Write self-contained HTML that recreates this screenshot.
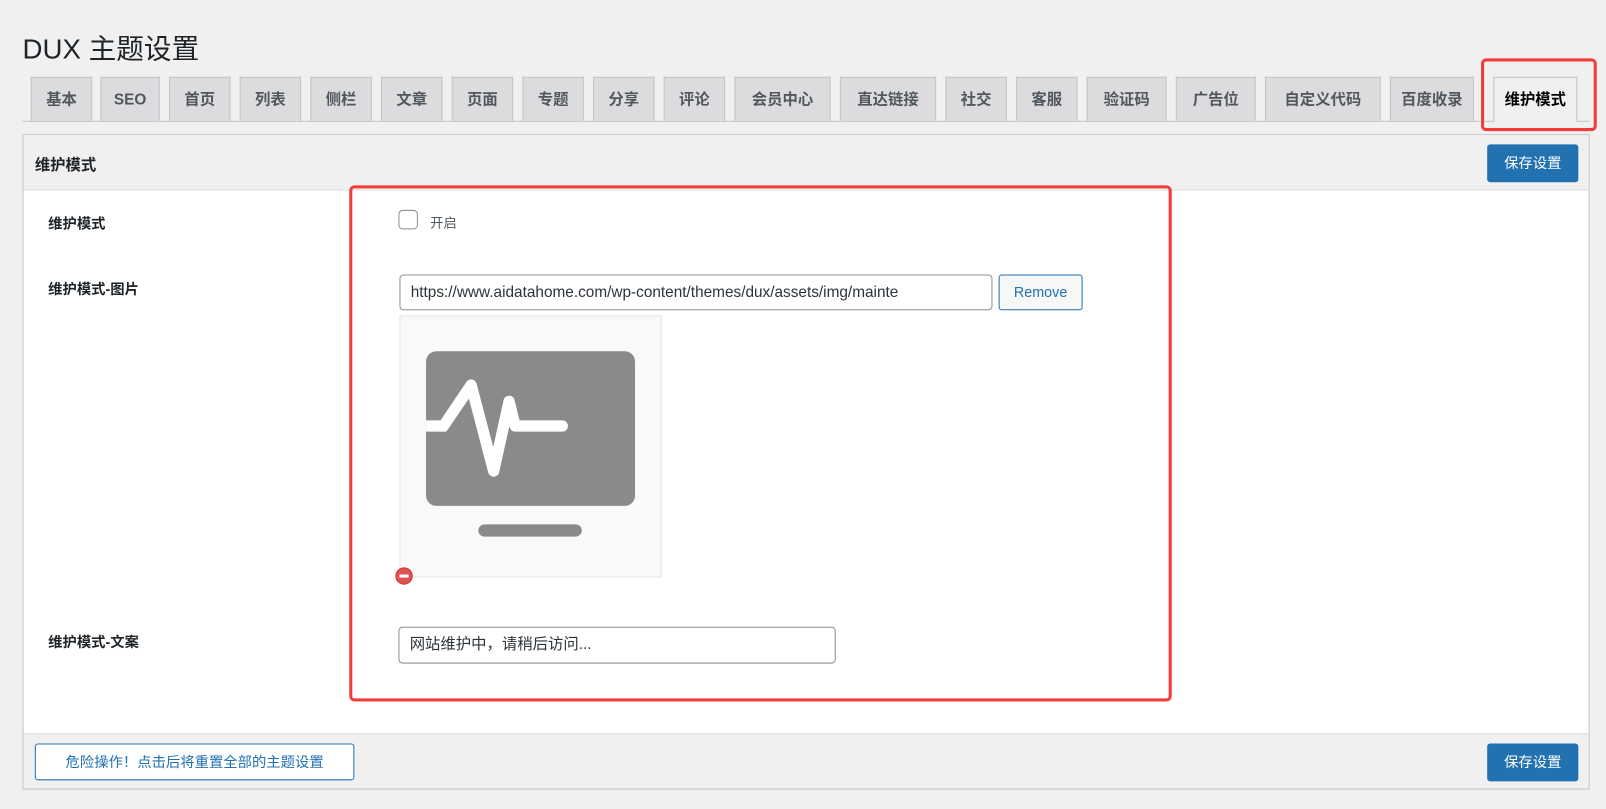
<!DOCTYPE html>
<html><head><meta charset="utf-8"><style>
*{box-sizing:border-box;margin:0;padding:0}
html,body{width:1606px;height:809px;overflow:hidden;background:#f0f0f1}
#w{position:absolute;left:0;top:0;width:1568px;height:790px;transform:scale(1.02423,1.02405);transform-origin:0 0;font-family:"Liberation Sans","Noto Sans CJK SC",sans-serif;color:#1d2327}
.a{position:absolute}
h1{position:absolute;left:22px;top:26px;font-size:27px;font-weight:400;color:#1d2327}
.tab{position:absolute;top:75px;height:43px;background:#dcdcde;border:1px solid #c3c4c7;border-bottom:none;font-size:15px;font-weight:700;color:#50575e;text-align:center;line-height:43px}
.tab.on{background:#f0f0f1;color:#000;height:44px}
.btn{position:absolute;background:#2271b1;color:#fff;border-radius:3px;font-size:14px;text-align:center;line-height:37px}
.lab{position:absolute;left:47px;font-size:14px;font-weight:700}
.red{position:absolute;border:3px solid #f43b3b;border-radius:5px}
</style></head><body><div id="w">
<h1>DUX 主题设置</h1>
<div class="a" style="left:22px;top:118px;width:1530px;height:1px;background:#c3c4c7"></div>
<div class="tab" style="left:30px;width:60px">基本</div>
<div class="tab" style="left:98px;width:58px">SEO</div>
<div class="tab" style="left:165px;width:60px">首页</div>
<div class="tab" style="left:234px;width:60px">列表</div>
<div class="tab" style="left:303px;width:60px">侧栏</div>
<div class="tab" style="left:372px;width:60px">文章</div>
<div class="tab" style="left:441px;width:60px">页面</div>
<div class="tab" style="left:510px;width:60px">专题</div>
<div class="tab" style="left:579px;width:60px">分享</div>
<div class="tab" style="left:648px;width:60px">评论</div>
<div class="tab" style="left:717px;width:94px">会员中心</div>
<div class="tab" style="left:820px;width:94px">直达链接</div>
<div class="tab" style="left:923px;width:60px">社交</div>
<div class="tab" style="left:992px;width:60px">客服</div>
<div class="tab" style="left:1061px;width:78px">验证码</div>
<div class="tab" style="left:1148px;width:78px">广告位</div>
<div class="tab" style="left:1235px;width:113px">自定义代码</div>
<div class="tab" style="left:1357px;width:82px">百度收录</div>
<div class="tab on" style="left:1458px;width:82px">维护模式</div>

<div class="a" style="left:22px;top:131px;width:1530px;height:640px;border:1px solid #c3c4c7;background:#fff"></div>
<div class="a" style="left:23px;top:132px;width:1528px;height:54px;background:#f0f0f1;border-bottom:1px solid #dcdcde"></div>
<div class="a" style="left:34px;top:150px;font-size:15px;font-weight:700">维护模式</div>
<div class="btn" style="left:1452px;top:141px;width:89px">保存设置</div>
<div class="a" style="left:23px;top:716px;width:1528px;height:54px;background:#f0f0f1;border-top:1px solid #dcdcde"></div>
<div class="a" style="left:34px;top:726px;width:312px;height:36px;border:1px solid #2271b1;border-radius:3px;background:#fff;color:#2271b1;font-size:14px;text-align:center;line-height:34px">危险操作！点击后将重置全部的主题设置</div>
<div class="btn" style="left:1452px;top:726px;width:89px">保存设置</div>

<div class="lab" style="top:208px">维护模式</div>
<div class="lab" style="top:272px">维护模式-图片</div>
<div class="lab" style="top:617px">维护模式-文案</div>

<div class="a" style="left:389px;top:205px;width:19px;height:19px;border:1px solid #8c8f94;border-radius:4px"></div>
<div class="a" style="left:420px;top:207px;font-size:13px;color:#50575e">开启</div>

<div class="a" style="left:390px;top:268px;width:579px;height:35px;border:1px solid #8c8f94;border-radius:4px;font-size:15px;line-height:33px;padding-left:10px;white-space:nowrap;overflow:hidden;color:#2c3338">https://www.aidatahome.com/wp-content/themes/dux/assets/img/mainte</div>
<div class="a" style="left:975px;top:268px;width:82px;height:35px;border:1px solid #2271b1;border-radius:3px;background:#f6f7f7;color:#2271b1;font-size:14px;text-align:center;line-height:33px">Remove</div>

<div class="a" style="left:390px;top:308px;width:256px;height:256px;background:#f9f9f9;border:1px solid #e4e4e4"></div>
<svg class="a" style="left:390px;top:308px" width="256" height="256" viewBox="390 308 256 256">
<rect x="416" y="343" width="204" height="151" rx="10" fill="#8a8a8a"/>
<rect x="416" y="410.5" width="20" height="11" fill="#fff"/>
<path d="M433 416 L460 376 L482 460 L497 392 L503 416 H549" fill="none" stroke="#fff" stroke-width="11" stroke-linecap="round" stroke-linejoin="round"/>
<rect x="467" y="512" width="101" height="12" rx="6" fill="#8a8a8a"/>
</svg>
<div class="a" style="left:386px;top:554px;width:17px;height:17px;border-radius:50%;background:#e05252;border:1px solid #c33"><div class="a" style="left:3px;top:6px;width:9px;height:3px;background:#fff"></div></div>

<div class="a" style="left:389px;top:612px;width:427px;height:36px;border:1px solid #8c8f94;border-radius:4px;font-size:15px;line-height:34px;padding-left:10px;color:#2c3338">网站维护中，请稍后访问...</div>

<div class="red" style="left:341px;top:181px;width:803px;height:504px"></div>
<div class="red" style="left:1446px;top:57px;width:113px;height:71px"></div>
</div></body></html>
